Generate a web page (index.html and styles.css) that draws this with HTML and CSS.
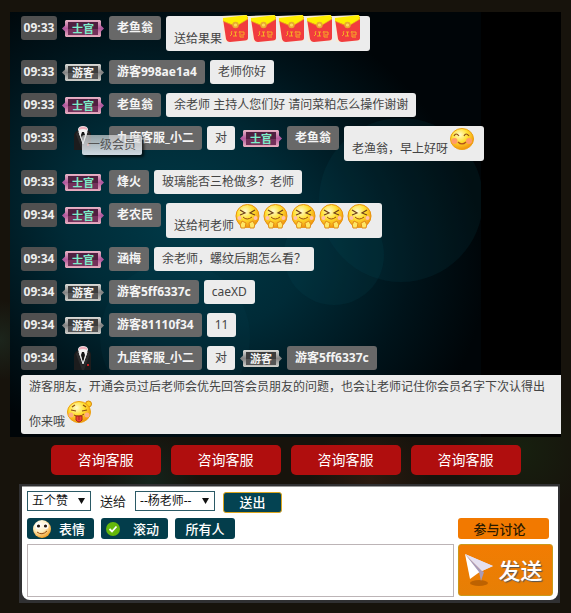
FILE: index.html
```
<!DOCTYPE html>
<html lang="zh-CN">
<head>
<meta charset="utf-8">
<title>直播聊天室</title>
<link rel="stylesheet" href="styles.css">
</head>
<body>
<svg class="sprite" aria-hidden="true">
  <defs>
    <radialGradient id="gold" cx="40%" cy="30%" r="75%">
      <stop offset="0" stop-color="#fffbd0"/><stop offset=".45" stop-color="#ffe030"/><stop offset="1" stop-color="#f08a08"/>
    </radialGradient>
    <radialGradient id="pale" cx="38%" cy="28%" r="75%">
      <stop offset="0" stop-color="#fff"/><stop offset=".5" stop-color="#ffeec0"/><stop offset="1" stop-color="#f39a1a"/>
    </radialGradient>
    <linearGradient id="sergeant-fill" x1="0" y1="0" x2="0" y2="1">
      <stop offset="0" stop-color="#e9b6c6"/><stop offset=".5" stop-color="#b65a9c"/><stop offset="1" stop-color="#e9b0c0"/>
    </linearGradient>
    <linearGradient id="guest-fill" x1="0" y1="0" x2="0" y2="1">
      <stop offset="0" stop-color="#dcdcd8"/><stop offset=".5" stop-color="#858585"/><stop offset="1" stop-color="#d0d0cc"/>
    </linearGradient>
    <symbol id="sergeant" viewBox="0 0 42 17">
      <path d="M0 8.500l4-4v8zM42 8.500l-4-4v8z" fill="#b05aa0"/>
      <path d="M4 0h34l1 1v15l-1 1H4l-1-1V1z" fill="url(#sergeant-fill)"/>
      <path d="M6 2h30v13H6z" fill="#4f1f40"/><path d="M6 9h30v6H6z" fill="#73305a"/>
    </symbol>
    <symbol id="guest" viewBox="0 0 42 17">
      <path d="M0 8.500l4-4v8zM42 8.500l-4-4v8z" fill="#858585"/>
      <path d="M4 0h34l1 1v15l-1 1H4l-1-1V1z" fill="url(#guest-fill)"/>
      <path d="M6 2h30v13H6z" fill="#3c3c3c"/><path d="M6 9h30v6H6z" fill="#555"/>
    </symbol>
    <symbol id="suit" viewBox="0 0 18 24">
      <path d="M0 24V9Q1 5 5 4h8q4 1 4 5v15z" fill="#1c1c1d"/>
      <path d="M4 3Q5 0 9 0t5 3l-1 5-4 10L5 8z" fill="#f4f2f2"/>
      <path d="M5 2q4-3 8 0v2q-4-2-8 0z" fill="#ecaebb"/>
      <path d="M8 6h2l1 3-2 8-2-8z" fill="#151515"/>
      <path d="M4 5l5 15 5-15 2 3-6 16H8L2 8z" fill="#2b2b2c"/>
      <path d="M5 6l4 12 4-12" fill="none" stroke="#e8e8e8"/>
      <path d="M13 18h2v2h-2z" fill="#c01f1f"/>
    </symbol>
    <symbol id="packet" viewBox="0 0 28 28">
      <path d="M0 1l24-1 2 4v22L2 27z" fill="#f7ecd9"/>
      <path d="M1 4l25-2v21q0 2-3 2.500L8 27q-3 0-4-3z" fill="#f13c3e"/>
      <path d="M1 3L25 0l1 4-10 6q-3 1-6-.5L1 6z" fill="#ffef00"/>
      <path d="M1 6l9 4q3 1 6 0l10-6" fill="none" stroke="#e6b417" stroke-width=".7"/>
      <circle cx="13.500" cy="10" r="3.200" fill="#e9ab2d"/><circle cx="13.500" cy="10" r="1.600" fill="#ffd95a"/>
      <path d="M10 16l-1 2 1 1-2 2M12 17h3M13.500 17v4M11 21h4M18 16l-1 2M18 17h4v3h-3M18 18v4h4" fill="none" stroke="#f7ad25"/>
    </symbol>
    <symbol id="laugh" viewBox="0 0 28 28">
      <circle cx="13.500" cy="14" r="11.500" fill="url(#gold)" stroke="#e9920c"/>
      <path d="M6 8l5 3-5 2M21 8l-5 3 5 2" fill="none" stroke="#70401a" stroke-width="1.200"/>
      <circle cx="5.500" cy="16" r="2" fill="#ffc0ac"/><circle cx="21.500" cy="16" r="2" fill="#ffc0ac"/>
      <path d="M9 15q4 4 9 0" fill="none" stroke="#9a4b12"/>
      <path d="M8 19l4 2-1 5H7q-2-3 1-7zM19 19l-4 2 1 5h4q2-3-1-7z" fill="#ffe765" stroke="#e08a15"/>
    </symbol>
    <symbol id="smile" viewBox="0 0 28 28">
      <ellipse cx="14" cy="14" rx="11.500" ry="10.500" fill="url(#gold)" stroke="#eda010"/>
      <path d="M6 11q2-4 5 0M16 11q2-4 5 0" fill="none" stroke="#8f4d14" stroke-width="1.200"/>
      <circle cx="6.500" cy="16" r="3" fill="#ff9a68"/><circle cx="21" cy="16" r="3" fill="#ff9a68"/>
      <path d="M10 17q4 4 8 0" fill="none" stroke="#b0501a" stroke-width="1.200"/>
    </symbol>
    <symbol id="tongue" viewBox="0 0 28 28">
      <circle cx="23.500" cy="6" r="3" fill="#ffcf25" stroke="#d7860c"/>
      <ellipse cx="14" cy="14" rx="11.500" ry="10.500" fill="url(#gold)" stroke="#eda010"/>
      <path d="M7 9l3-2M18 7l3 2M6 12l5 1M17 13l5-1" fill="none" stroke="#8f4d14" stroke-width="1.200"/>
      <circle cx="6" cy="17" r="2.500" fill="#ffad80"/><circle cx="22" cy="17" r="2.500" fill="#ffad80"/>
      <path d="M9 17q5 3 10-1" fill="none" stroke="#91400f"/>
      <path d="M11 18h6v4q-3 4-6 0z" fill="#f04438" stroke="#a52618"/><path d="M14 18v4" stroke="#a52618"/>
    </symbol>
  </defs>
</svg>

<main class="room">
  <section class="chat" aria-label="聊天记录">
    <svg class="chat-art" viewBox="0 0 471 425" preserveAspectRatio="none" aria-hidden="true">
      <defs>
        <radialGradient id="glow" gradientUnits="userSpaceOnUse" cx="175" cy="215" r="310" gradientTransform="translate(175 215) rotate(24) scale(1 .8) translate(-175 -215)">
          <stop offset="0" stop-color="#003a48"/><stop offset=".4" stop-color="#002b37"/><stop offset=".75" stop-color="#00131a"/><stop offset="1" stop-color="#000508"/>
        </radialGradient>
      </defs>
      <rect width="471" height="425" fill="url(#glow)"/>
      <circle cx="391" cy="188" r="82" fill="#0a5265" opacity=".14"/>
      <circle cx="324" cy="243" r="50" fill="#0a5265" opacity=".14"/>
      <circle cx="165" cy="325" r="75" fill="#0a5265" opacity=".1"/>
    </svg>
    <ol class="messages">
      <li class="row"><time class="time">09:33</time><span class="badge sergeant"><svg><use href="#sergeant"/></svg><b>士官</b></span><b class="name">老鱼翁</b><p class="text">送给果果<svg class="emo"><use href="#packet"/></svg><svg class="emo"><use href="#packet"/></svg><svg class="emo"><use href="#packet"/></svg><svg class="emo"><use href="#packet"/></svg><svg class="emo"><use href="#packet"/></svg></p></li>
      <li class="row"><time class="time">09:33</time><span class="badge"><svg><use href="#guest"/></svg><b>游客</b></span><b class="name">游客998ae1a4</b><p class="text">老师你好</p></li>
      <li class="row"><time class="time">09:33</time><span class="badge sergeant"><svg><use href="#sergeant"/></svg><b>士官</b></span><b class="name">老鱼翁</b><p class="text">余老师 主持人您们好 请问菜粕怎么操作谢谢</p></li>
      <li class="row"><time class="time">09:33</time><span class="member"><svg><use href="#suit"/></svg><span class="tip" role="tooltip">一级会员</span></span><b class="name">九度客服_小二</b><span class="text">对</span><span class="badge sergeant"><svg><use href="#sergeant"/></svg><b>士官</b></span><b class="name">老鱼翁</b><p class="text">老渔翁，早上好呀<svg class="emo"><use href="#smile"/></svg></p></li>
      <li class="row"><time class="time">09:33</time><span class="badge sergeant"><svg><use href="#sergeant"/></svg><b>士官</b></span><b class="name">烽火</b><p class="text">玻璃能否三枪做多？老师</p></li>
      <li class="row"><time class="time">09:34</time><span class="badge sergeant"><svg><use href="#sergeant"/></svg><b>士官</b></span><b class="name">老农民</b><p class="text">送给柯老师<svg class="emo"><use href="#laugh"/></svg><svg class="emo"><use href="#laugh"/></svg><svg class="emo"><use href="#laugh"/></svg><svg class="emo"><use href="#laugh"/></svg><svg class="emo"><use href="#laugh"/></svg></p></li>
      <li class="row"><time class="time">09:34</time><span class="badge sergeant"><svg><use href="#sergeant"/></svg><b>士官</b></span><b class="name">涵梅</b><p class="text">余老师，螺纹后期怎么看？</p></li>
      <li class="row"><time class="time">09:34</time><span class="badge"><svg><use href="#guest"/></svg><b>游客</b></span><b class="name">游客5ff6337c</b><p class="text">caeXD</p></li>
      <li class="row"><time class="time">09:34</time><span class="badge"><svg><use href="#guest"/></svg><b>游客</b></span><b class="name">游客81110f34</b><p class="text">11</p></li>
      <li class="row"><time class="time">09:34</time><span class="member"><svg><use href="#suit"/></svg></span><b class="name">九度客服_小二</b><span class="text">对</span><span class="badge"><svg><use href="#guest"/></svg><b>游客</b></span><b class="name">游客5ff6337c</b><p class="text wide">游客朋友，开通会员过后老师会优先回答会员朋友的问题，也会让老师记住你会员名字下次认得出你来哦<svg class="emo"><use href="#tongue"/></svg></p></li>
    </ol>
  </section>

  <nav class="services">
    <a href="#service1">咨询客服</a><a href="#service2">咨询客服</a><a href="#service3">咨询客服</a><a href="#service4">咨询客服</a>
  </nav>

  <form class="composer">
    <div class="panel">
      <div class="gift">
        <span class="pick praise"><select aria-label="礼物"><option>五个赞</option></select></span>
        <label for="teacher">送给</label>
        <span class="pick teacher"><select id="teacher"><option>--杨老师--</option></select></span>
        <button class="give" type="button">送出</button>
      </div>
      <div class="tools">
        <button class="tool" type="button"><svg width="20" height="20" viewBox="0 0 20 20"><circle cx="10" cy="10" r="9" fill="url(#pale)"/><ellipse cx="6" cy="7" rx="2.500" ry="3" fill="#fff"/><ellipse cx="14" cy="7" rx="2.500" ry="3" fill="#fff"/><circle cx="6.500" cy="7" r="1.600" fill="#27180c"/><circle cx="13.500" cy="7" r="1.600" fill="#27180c"/><path d="M5 13q5 4 10-1" fill="none" stroke="#92480e"/></svg>表情</button>
        <button class="tool" type="button"><svg width="14" height="14" viewBox="0 0 14 14"><circle cx="7" cy="7" r="7" fill="#65b80b"/><path d="M3.500 7l2.500 2.500 4.500-5" fill="none" stroke="#fff" stroke-width="1.800"/></svg>滚动</button>
        <button class="tool all" type="button">所有人</button>
        <button class="discuss" type="button">参与讨论</button>
      </div>
      <div class="write">
        <textarea aria-label="聊天内容"></textarea>
        <button class="send" type="submit"><svg width="30" height="34" viewBox="0 0 30 34"><ellipse cx="15" cy="30" rx="9" ry="3" fill="#a65300" opacity=".65"/><path d="M1 1l28 12-11 5z" fill="#dcd5e9"/><path d="M1 1l5 25 11-8z" fill="#fff"/><path d="M1 1l14 18 2 9 3-9-2-1z" fill="#a99bb8"/><path d="M1 1l17 17 11-5z" fill="#e5e0f0"/></svg>发送</button>
      </div>
    </div>
  </form>
</main>
</body>
</html>
```
FILE: styles.css
```
* { box-sizing: border-box; }
body {
  margin: 0;
  min-height: 100vh;
  font: 12px/24px "Noto Sans", "Noto Sans CJK SC", sans-serif;
  background:
    radial-gradient(circle at 0 340px, #1c251c 0, transparent 40px),
    radial-gradient(circle at 150px 480px, #14241c 0, transparent 50px),
    radial-gradient(circle at 370px 480px, #2b1b10 0, transparent 60px),
    radial-gradient(circle at 520px 450px, #17200f 0, transparent 70px),
    #17130c;
}
.sprite { position: absolute; width: 0; height: 0; }
.room { padding: 12px 10px 10px; }
.chat { position: relative; overflow: hidden; background: #000; }
.chat-art { position: absolute; left: 0; top: 0; width: 471px; height: 100%; }
.messages {
  position: relative;
  display: flex;
  flex-direction: column;
  gap: 9px;
  margin: 0;
  padding: 4px 0 3px 11px;
  list-style: none;
}
.row { display: flex; flex-wrap: wrap; align-items: flex-start; gap: 5px; }
.time, .name, .text { border-radius: 3px; }
.time { width: 36px; text-align: center; font-weight: bold; color: #eee; background: #505050; }
.name { padding: 0 8px; color: #f4f4f4; background: #686868; }
.text { margin: 0; padding: 0 8px; color: #444; background: #ececec; }
.wide { width: 100%; border-radius: 3px 0 0 3px; }
.emo { width: 28px; height: 28px; margin-top: -1px; vertical-align: baseline; }
.badge { display: grid; width: 42px; height: 17px; margin-top: 4px; place-items: center; }
.badge > * { grid-area: 1 / 1; }
.badge svg { width: 42px; height: 17px; }
.badge b { font-size: 11px; line-height: 17px; color: #f4f4f4; }
.sergeant b { color: #7decc9; }
.member { position: relative; width: 42px; height: 24px; text-align: center; }
.member svg { display: block; width: 18px; height: 24px; margin: 0 auto; }
.tip {
  position: absolute;
  left: 20px;
  top: 9px;
  padding: 0 6px;
  line-height: 20px;
  white-space: nowrap;
  color: #555;
  background: linear-gradient(rgba(225, 225, 225, .65), rgba(225, 232, 240, .92));
  border-radius: 2px;
  box-shadow: 2px 2px 3px rgba(0, 0, 0, .7);
}
.services { display: flex; justify-content: center; gap: 10px; padding: 8px 30px 9px; }
.services a {
  flex: 0 1 110px;
  border-radius: 5px;
  background: #b00e0e;
  color: #fff;
  font-size: 14px;
  line-height: 30px;
  text-align: center;
  text-decoration: none;
}
.composer { margin: 0 1px 0 9px; padding: 2px 2px 3px 3px; background: #303032; }
.panel {
  display: flex;
  flex-direction: column;
  gap: 5px;
  padding: 4px 5px 3px;
  border-top: 1px solid #999;
  border-radius: 0 0 8px 8px;
  background: #fff;
}
.gift, .tools, .write { display: flex; }
.gift { align-items: flex-start; font-size: 13px; line-height: 20px; color: #222; }
.gift label { margin: 0 9px; }
.pick { position: relative; }
.pick::after {
  content: "";
  position: absolute;
  right: 6px;
  top: 7px;
  width: 7px;
  height: 6px;
  background: #111;
  clip-path: polygon(0 0, 100% 0, 50% 100%);
  pointer-events: none;
}
.pick select {
  appearance: none;
  display: block;
  width: 100%;
  height: 20px;
  padding: 0 4px;
  border: 1px solid #2b5a66;
  border-radius: 0;
  background: #fff;
  color: #111;
  font: 12px/18px "Noto Sans", "Noto Sans CJK SC", sans-serif;
}
.praise { width: 64px; }
.teacher { width: 80px; }
button { padding: 0; border: 0; font-family: inherit; font-weight: 500; white-space: nowrap; }
.give {
  width: 59px;
  height: 21px;
  margin: 1px 0 0 8px;
  border: 1px solid #dca51e;
  border-radius: 3px;
  background: #044352;
  color: #fff;
  font-size: 13px;
  line-height: 19px;
}
.tools { gap: 7px; }
.tool {
  display: flex;
  align-items: center;
  justify-content: space-between;
  width: 67px;
  height: 21px;
  padding: 0 9px 0 5px;
  border-radius: 3px;
  background: #033d4b;
  color: #fff;
  font-size: 13px;
  line-height: 20px;
}
.all { width: 60px; justify-content: center; padding: 0; }
.discuss {
  width: 91px;
  height: 21px;
  margin: 0 4px 0 auto;
  padding-right: 8px;
  border-radius: 3px;
  background: #f27900;
  color: #2b1a00;
  font-size: 13px;
  line-height: 20px;
}
.write { gap: 4px; }
.write textarea { flex: 1; min-width: 0; height: 53px; border: 1px solid #bcb4b6; background: #fff; resize: none; }
.send {
  display: flex;
  align-items: center;
  justify-content: center;
  gap: 4px;
  width: 95px;
  height: 52px;
  padding-right: 4px;
  border: 1px solid #c99a1c;
  border-radius: 3px;
  background: linear-gradient(#f27c02, #e67f05);
  color: #fff;
  font-size: 22px;
  line-height: 30px;
  text-shadow: 1px 1px 1px #555;
}
```
